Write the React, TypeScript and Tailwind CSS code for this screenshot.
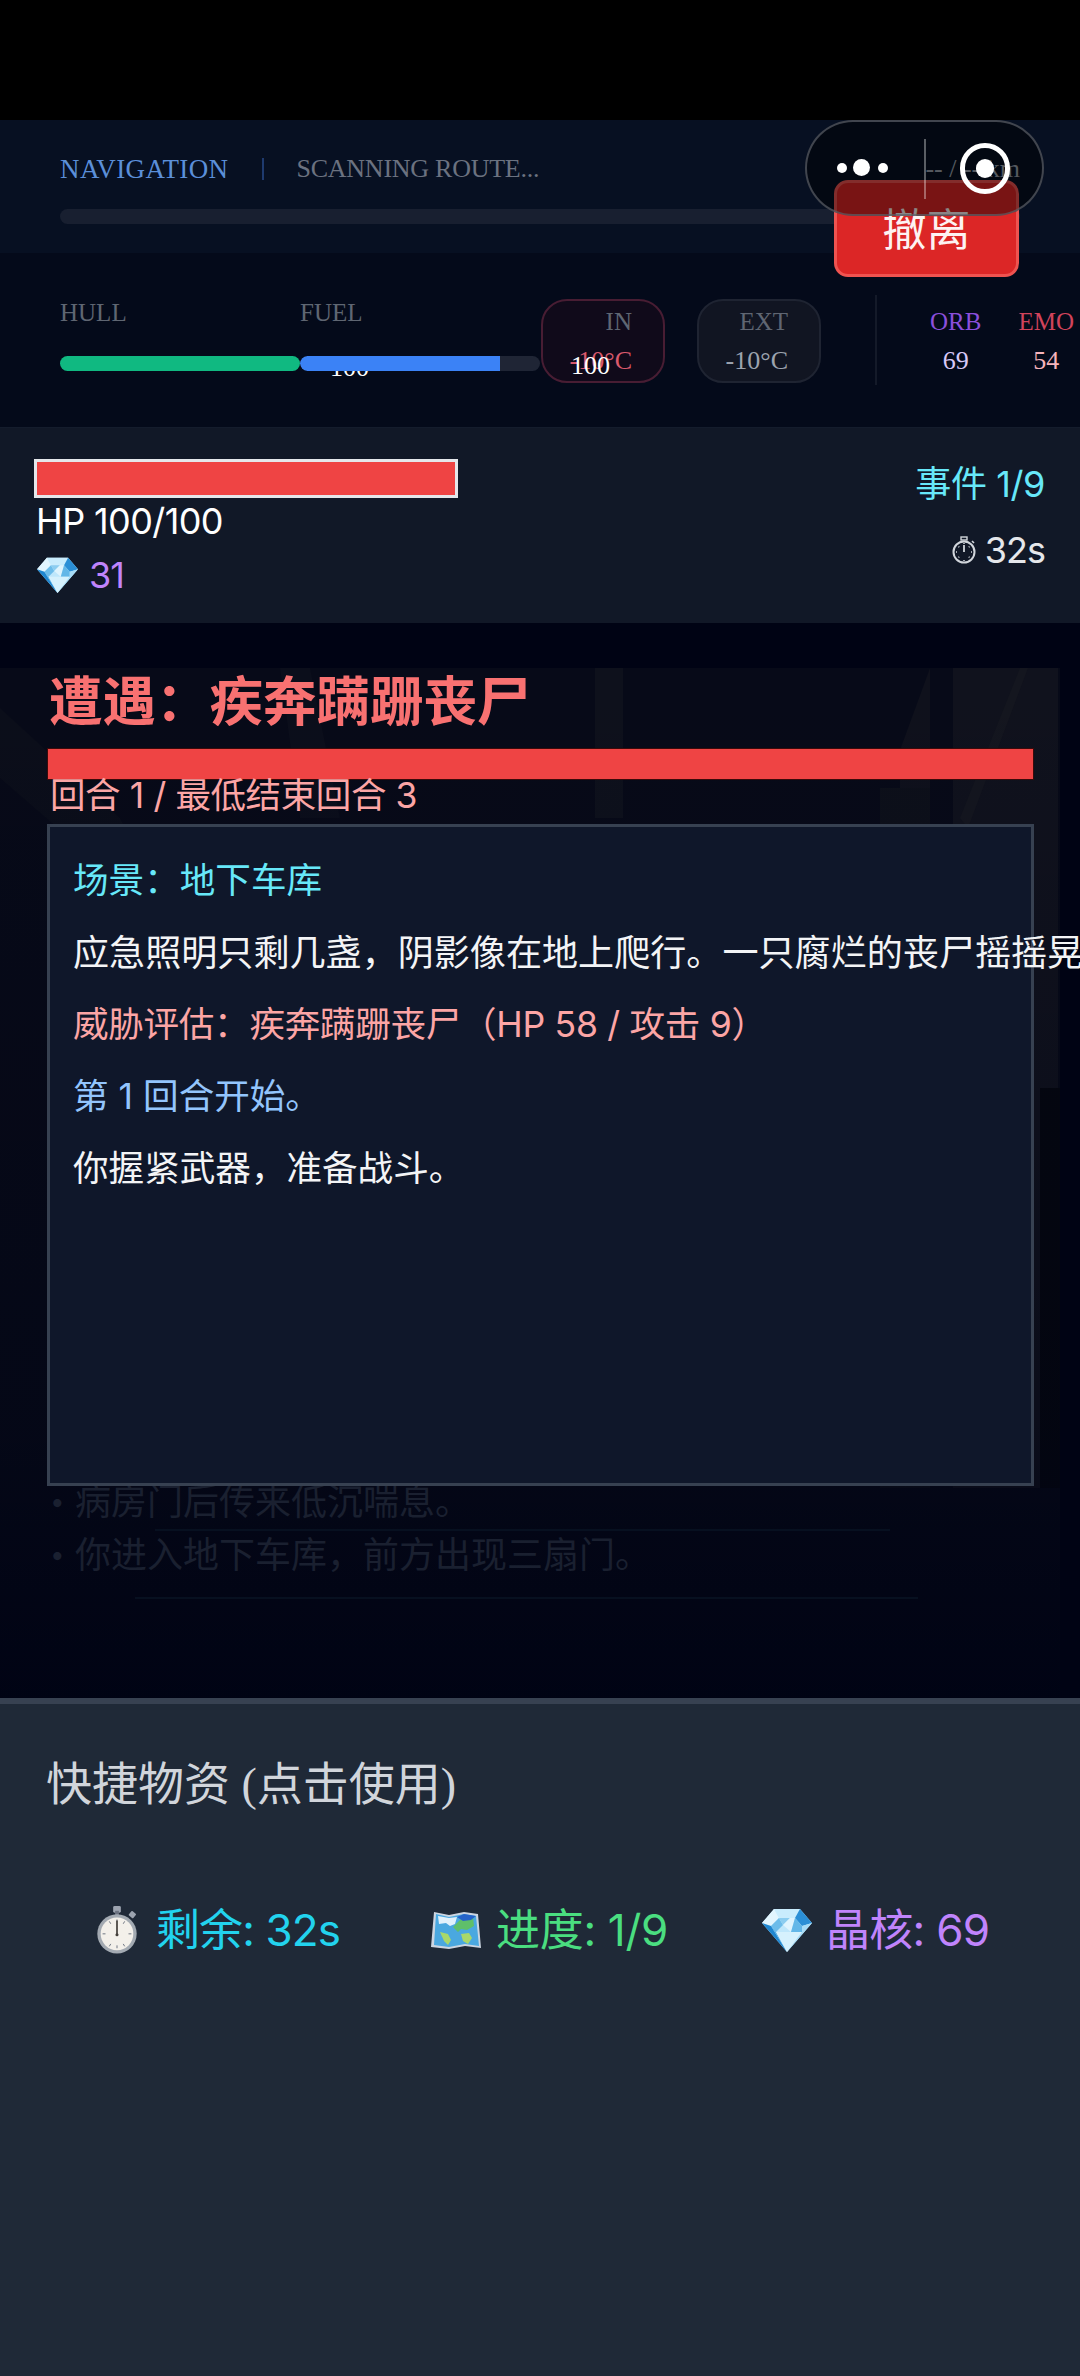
const sans = "font-['Inter','Noto_Sans_CJK_SC',sans-serif]";
const serif = "font-['Liberation_Serif','Noto_Sans_CJK_SC',serif]";

function Gem({ className }: { className: string }) {
  return (
    <svg viewBox="0 0 50 44" className={className}>
      <path d="M12 1h26l12 14-25 29L0 15z" fill="#bfe7fb" />
      <path d="M12 1h26l-5 9H17z" fill="#c9ecfd" />
      <path d="M38 1l12 14-10 3-7-8z" fill="#2b8fd6" />
      <path d="M12 1L0 15l9 3 8-8z" fill="#e2f5fe" />
      <path d="M17 10l-8 8 5 6 7-7z" fill="#6cbcea" />
      <path d="M17 10l4 7 7-7z" fill="#8ccdf0" />
      <path d="M28 10l-7 7 8 7 4-14z" fill="#dff4fe" />
      <path d="M33 10l-4 14h11v-6z" fill="#63b7e8" />
      <path d="M0 15l9 3 16 26z" fill="#1f86d0" />
      <path d="M9 18l5 6 11 20z" fill="#4ea8e2" />
      <path d="M14 24h26L25 44z" fill="#d6f1fd" />
      <path d="M40 18l10-3-25 29 15-20z" fill="#a7dcf7" />
    </svg>
  );
}

function Stopwatch() {
  return (
    <svg viewBox="0 0 44 50" className="h-[48px] w-[44px] shrink-0">
      <rect x="18" y="0" width="8" height="7" rx="1.5" fill="#9ca3af" />
      <rect x="20" y="5" width="4" height="5" fill="#6b7280" />
      <rect x="35" y="6" width="6" height="6" rx="1" fill="#9ca3af" transform="rotate(40 38 9)" />
      <circle cx="22" cy="29" r="20.5" fill="#a3aab2" />
      <circle cx="22" cy="29" r="17" fill="#f3f0ea" />
      <path d="M22 14v3M22 41v3M7 29h3M34 29h3M14 16l1.500 2.500M30 16l-1.500 2.500M14 42l1.500-2.500M30 42l-1.500-2.500" stroke="#6b7280" strokeWidth="1" />
      <path d="M22 15v15" stroke="#57534e" strokeWidth="2" />
      <circle cx="22" cy="30" r="1.600" fill="#44403c" />
    </svg>
  );
}

function MapIcon() {
  return (
    <svg viewBox="0 0 50 40" className="h-[40px] w-[50px] shrink-0">
      <path d="M3 2l15 3 15-3 14 2 3 34-16-2-16 3-18-2z" fill="#cbd5e1" />
      <path d="M5 4l13 3 15-3 12 2 3 30-14-2-16 3-15-2z" fill="#4aa8e0" />
      <path d="M7 6l11 2 8-1-2 7-5 2-4-3-7 1z" fill="#e2f1fb" />
      <path d="M22 17l8-8 12-2 1 9-7 4-6-1-3 3z" fill="#5fbf6a" />
      <path d="M26 7l7-3 12 2-5 4-8 1z" fill="#2563c9" />
      <path d="M9 22l8 2 3 6-3 5-4-4z" fill="#a8d86a" />
      <path d="M30 24l8-1 3 5-4 6-5-3z" fill="#a8d86a" />
    </svg>
  );
}

function SmallWatch() {
  return (
    <svg viewBox="0 0 26 28" className="h-[28px] w-[26px]" fill="none" stroke="#d1d5db">
      <rect x="10" y="1" width="6" height="3" strokeWidth="1.400" />
      <path d="M21 5l2 2" strokeWidth="1.600" />
      <circle cx="13" cy="16" r="10.500" strokeWidth="2" />
      <path d="M13 9v7" strokeWidth="1.800" />
      <path d="M13 7v1M13 24v1M5 16h1M20 16h1M7.500 10.500l.7.7M18.500 10.500l-.7.7M7.500 21.500l.7-.7M18.500 21.500l-.7-.7" strokeWidth="1.500" />
    </svg>
  );
}

function SceneArt() {
  return (
    <svg viewBox="0 0 1060 1030" preserveAspectRatio="none" className="absolute left-0 top-[668px] h-[1030px] w-[1060px]">
      <defs>
        <linearGradient id="fade" x1="0" y1="0" x2="0" y2="1">
          <stop offset="0" stopColor="#000314" stopOpacity="0" />
          <stop offset="0.75" stopColor="#000314" stopOpacity="0.35" />
          <stop offset="1" stopColor="#000314" stopOpacity="0.97" />
        </linearGradient>
      </defs>
      <rect width="1060" height="1030" fill="#070a18" />
      <path d="M0 40l120 110 30 60v30L0 110z" fill="#0b0e1a" />
      <path d="M280 0h30l30 150h-40z" fill="#0b0e1b" />
      <rect x="595" y="0" width="28" height="150" fill="#0e111c" />
      <rect x="953" y="0" width="105" height="820" fill="#10121d" />
      <path d="M900 82l30-82v120h-30z" fill="#0f111c" />
      <rect x="880" y="120" width="50" height="700" fill="#0d101a" />
      <path d="M960 150l60-150h8l-60 160z" fill="#14161f" />
      <rect x="1040" y="420" width="20" height="400" fill="#05070f" />
      <rect width="1060" height="1030" fill="url(#fade)" />
      <path d="M155 862h735M135 930h783" stroke="#0a1424" strokeWidth="1.500" />
    </svg>
  );
}

export default function App() {
  return (
    <div className={`relative h-[2376px] w-[1080px] overflow-hidden bg-[#000314] ${sans}`}>
      <SceneArt />
      <div className="h-[120px] bg-black" />

      {/* nav */}
      <div className={`relative h-[133px] bg-[#071022] px-[60px] pt-[36px] ${serif}`}>
        <div className="flex h-[26px] items-center text-[26px] leading-[26px]">
          <span className="text-[27px] text-[#5b8fd9] tracking-[0.4px]">NAVIGATION</span>
          <span className="mx-[33px] h-[22px] w-[2px] bg-[#1e3a6e]" />
          <span className="tracking-[-0.25px] text-[#6b7280]">SCANNING ROUTE...</span>
          <span className="ml-auto text-[26px] text-[#9ca3af]">-- / -- km</span>
        </div>
        <div className="mt-[27px] h-[15px] rounded-full bg-[#181f30]" />
      </div>

      {/* ship stats */}
      <div className={`relative flex h-[174px] items-start bg-[#040a1a] pl-[60px] pt-[46px] ${serif}`}>
        <div className="relative z-0 w-[240px]">
          <div className="pt-[1px] text-[25px] leading-[26px] text-[#5f6672]">HULL</div>
          <div className="mt-[30px] h-[15px] rounded-full bg-[#10b981]" />
          <div className="absolute left-[270px] top-[54px] text-[26px] leading-[30px] text-white">100</div>
        </div>
        <div className="relative z-10 w-[240px]">
          <div className="pt-[1px] text-[25px] leading-[26px] text-[#5f6672]">FUEL</div>
          <div className="mt-[30px] h-[15px] overflow-hidden rounded-full bg-[#1f2535]">
            <div className="h-full w-[200px] rounded-l-full bg-[#3b82f6]" />
          </div>
        </div>
        <div className="ml-[1px] flex h-[84px] w-[124px] flex-col items-end rounded-[26px] border-2 border-[#481d33] bg-[#100a1a] pr-[31px] pt-[6px] text-[26px] leading-[30px]">
          <span className="text-[25px] text-[#5f6672]">IN</span>
          <span className="mt-[9px] text-[#d9596c]">-10°C</span>
        </div>
        <div className="absolute left-[571px] top-[98px] z-20 text-[26px] leading-[30px] text-white">100</div>
        <div className="ml-[32px] flex h-[84px] w-[124px] flex-col items-end rounded-[26px] border-2 border-[#1f2432] bg-[#111522] pr-[31px] pt-[6px] text-[26px] leading-[30px]">
          <span className="text-[25px] text-[#5f6672]">EXT</span>
          <span className="mt-[9px] text-[#9ca3af]">-10°C</span>
        </div>
        <div className="-mt-[4px] ml-[54px] h-[90px] w-[2px] bg-[#141a29]" />
        <div className="ml-[53px] flex flex-col items-center pt-[8px] text-[25px] leading-[30px]">
          <span className="text-[#8b4fdc]">ORB</span>
          <span className="mt-[9px] text-[26px] text-[#d8c8f8]">69</span>
        </div>
        <div className="ml-[37px] flex flex-col items-center pt-[8px] text-[25px] leading-[30px]">
          <span className="text-[#d1435b]">EMO</span>
          <span className="mt-[9px] text-[26px] text-[#f7b4bc]">54</span>
        </div>
      </div>

      {/* player */}
      <div className="flex h-[196px] justify-between border-t border-[#141c2c] bg-[#111827] pl-[34px] pr-[35px] pt-[31px]">
        <div>
          <div className="h-[39px] w-[424px] border-[3px] border-[#e5e7eb] bg-[#ef4444]" />
          <div className="ml-[2px] mt-[1px] text-[36px] leading-[44px] tracking-[-0.6px] text-white">HP 100/100</div>
          <div className="ml-[3px] mt-[10px] flex items-center gap-[11px] text-[36px] leading-[44px] tracking-[-1px] text-[#c084fc]">
            <Gem className="h-[36px] w-[41px]" />
            <span>31</span>
          </div>
        </div>
        <div className="flex flex-col items-end">
          <div className="mt-[3px] text-[36px] leading-[44px] tracking-[-0.4px] text-[#67e8f9]">事件 1/9</div>
          <div className="mt-[22px] flex items-center gap-[8px] text-[36px] leading-[44px] tracking-[-1px] text-[#e5e7eb]">
            <SmallWatch />
            <span>32s</span>
          </div>
        </div>
      </div>

      {/* encounter */}
      <div className="relative h-[1075px] pl-[48px] pt-[47px]">
        <div className="relative w-[985px]">
          <h1 className="ml-[1px] text-[53.5px] font-bold leading-[64px] text-[#f87171]">遭遇：疾奔蹒跚丧尸</h1>
          <div className="mt-[15px] h-[30px] bg-[#ef4444] shadow-[0_0_0_1px_#3b0a0a]" />
          <div className="ml-[2px] -mt-[1px] text-[35.5px] leading-[36px] tracking-[-0.4px] text-[#fca5a5]">回合 1 / 最低结束回合 3</div>
          <div className="absolute left-[2px] top-[805px] z-0 text-[36px] text-[#1a2030]">
            <div className="flex h-[53px] items-center"><span className="w-[25px] text-[26px]">•</span><span>病房门后传来低沉喘息。</span></div>
            <div className="flex h-[53px] items-center"><span className="w-[25px] text-[26px]">•</span><span>你进入地下车库，前方出现三扇门。</span></div>
          </div>
          <div className="relative z-10 -ml-[1px] mt-[10px] h-[662px] w-[987px] border-[3px] border-[#374151] bg-[#0f172a] pl-[23px] pt-[29px] text-[35.6px] leading-[50px]">
            <div className="text-[#67e8f9]">场景：地下车库</div>
            <div className="mt-[22px] whitespace-nowrap text-[36.1px] text-[#f3f4f6]">应急照明只剩几盏，阴影像在地上爬行。一只腐烂的丧尸摇摇晃晃地走来。</div>
            <div className="mt-[22px] tracking-[-0.3px] text-[#fca5a5]">威胁评估：疾奔蹒跚丧尸（HP 58 / 攻击 9）</div>
            <div className="mt-[22px] text-[#93c5fd]">第 1 回合开始。</div>
            <div className="mt-[22px] text-[#f3f4f6]">你握紧武器，准备战斗。</div>
          </div>
        </div>
      </div>

      {/* quick items */}
      <div className="h-[678px] border-t-[6px] border-[#374151] bg-[#1f2937] pl-[46px] pt-[51px]">
        <div className={`text-[46px] leading-[60px] text-[#d1d5db] ${serif}`}>快捷物资 (点击使用)</div>
        <div className="mt-[85px] flex items-center text-[44px] leading-[60px] tracking-[-0.9px]">
          <div className="ml-[49px] flex items-center gap-[17px] text-[#22d3ee]">
            <Stopwatch />
            <span>剩余: 32s</span>
          </div>
          <div className="ml-[91px] flex items-center gap-[15px] text-[#4ade80]">
            <MapIcon />
            <span className="tracking-[-0.3px]">进度: 1/9</span>
          </div>
          <div className="ml-[94px] flex items-center gap-[14px] text-[#c084fc]">
            <Gem className="h-[44px] w-[50px]" />
            <span className="tracking-[-0.7px]">晶核: 69</span>
          </div>
        </div>
      </div>

      {/* overlay controls */}
      <button className={`absolute left-[834px] top-[180px] flex h-[97px] w-[185px] items-center justify-center rounded-[14px] border-[3px] border-[#ef5350] bg-[#dc2626] pt-[6px] text-[44px] leading-[50px] text-[#fdf2f2] ${serif}`}>撤离</button>
      <div className="absolute left-[805px] top-[120px] h-[96px] w-[239px] rounded-full border-2 border-[#5b5f68]/70 bg-black/45">
        <span className="absolute left-[30px] top-[41px] h-[10px] w-[10px] rounded-full bg-white" />
        <span className="absolute left-[46px] top-[37px] h-[17px] w-[17px] rounded-full bg-white" />
        <span className="absolute left-[71px] top-[41px] h-[10px] w-[10px] rounded-full bg-white" />
        <span className="absolute left-[117px] top-[17px] h-[60px] w-[2px] bg-white/35" />
        <span className="absolute left-[153px] top-[21px] h-[51px] w-[50px] rounded-full border-[5px] border-white" />
        <span className="absolute left-[169px] top-[37px] h-[19px] w-[18px] rounded-full bg-white" />
      </div>
    </div>
  );
}
